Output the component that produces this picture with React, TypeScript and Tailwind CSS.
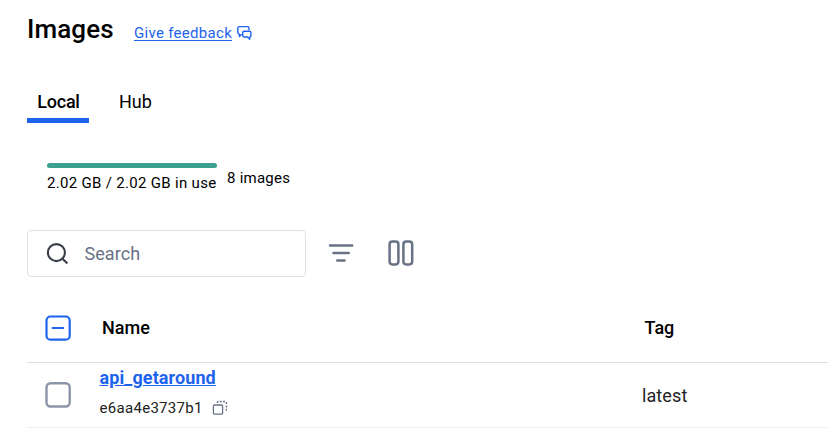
import React from "react";

function FeedbackIcon() {
  return (
    <svg className="h-4 w-4" viewBox="0 0 16 16" fill="none" stroke="#1d63ed" strokeWidth="1.4" strokeLinejoin="round">
      <path d="M4.6 9.2L2.4 11.4V9.2C1.3 9.1 0.8 8.5 0.8 7.6V3.2C0.8 2.2 1.4 1.6 2.4 1.6H10.4C11.4 1.6 12 2.2 12 3.2V5.2" />
      <path d="M7.2 6.2H12.4C13.3 6.2 13.9 6.8 13.9 7.6V10.6C13.9 11.4 13.5 11.9 12.7 12V14.2L10.5 12H7.2C6.3 12 5.7 11.4 5.7 10.6V7.6C5.7 6.8 6.3 6.2 7.2 6.2Z" />
    </svg>
  );
}

function CopyIcon() {
  return (
    <svg className="h-4 w-4" viewBox="0 0 16 16" fill="none" stroke="#677285" strokeWidth="1.3">
      <rect x="1.4" y="5" width="9.2" height="9.2" rx="1.2" />
      <path d="M5.3 3V2.6Q5.3 1.5 6.4 1.5H13.3Q14.4 1.5 14.4 2.6V9.6Q14.4 10.7 13.3 10.7H12.6" strokeDasharray="2 1.3" />
    </svg>
  );
}

function App() {
  return (
    <main className="h-[428px] w-[828px] overflow-hidden bg-white pl-[27px] font-['Roboto',sans-serif] whitespace-nowrap text-black">
      <header className="flex h-[60px] items-start">
        <h1 className="mt-[14px] w-[107px] text-[26px] leading-[30px] font-medium tracking-[0.1px]">Images</h1>
        <a className="mt-[23px] flex items-center text-[#1d63ed]" href="#">
          <span className="mr-[5px] w-[98px] text-[15px] leading-5 tracking-[0.3px] underline underline-offset-2">Give feedback</span>
          <FeedbackIcon />
        </a>
      </header>
      <nav className="mt-[22px] flex h-[41px] text-[18px] leading-10">
        <div className="w-[62px] border-b-[5px] border-[#1d63ed] pl-[10.3px] font-medium leading-[39px] tracking-[-0.25px]">Local</div>
        <div className="ml-[30px] leading-[39px]">Hub</div>
      </nav>
      <section className="ml-5 mt-10 flex h-[67px] text-[15px] tracking-[0.31px]">
        <div className="w-[170px]">
          <div className="h-[5px] rounded-full bg-[#3ba08d]" />
          <div className="mt-[5px] leading-5">2.02 GB / 2.02 GB in use</div>
        </div>
        <div className="ml-[10px] mt-[5px] leading-5 tracking-[0.25px]">8 images</div>
      </section>
      <div className="flex h-[47px] items-center">
        <div className="flex h-[47px] w-[279px] items-center rounded-[4px] border border-[#dedfe1] pl-[18px]">
          <svg className="h-6 w-6" viewBox="0 0 24 24" fill="none" stroke="#393f49" strokeWidth="2.1">
            <circle cx="10.4" cy="10.6" r="8.5" />
            <path d="M16.5 16.7L21.4 21.6" />
          </svg>
          <span className="ml-[14.5px] text-[18px] tracking-[0.05px] text-[#677285]">Search</span>
        </div>
        <svg className="ml-[22px] h-7 w-7" viewBox="0 0 28 28" stroke="#677285" strokeWidth="2.5" strokeLinecap="round">
          <path d="M2 5.4H24.2M5.5 13H20.7M9.3 20.4H16.5" />
        </svg>
        <svg className="ml-[31px] h-7 w-7" viewBox="0 0 28 28" fill="none" stroke="#677285" strokeWidth="2.5">
          <rect x="2.6" y="1.6" width="8.8" height="22.8" rx="2.8" />
          <rect x="16.4" y="1.6" width="8.8" height="22.8" rx="2.8" />
        </svg>
      </div>
      <div className="mt-[17px] flex h-[69px] items-center border-b border-[#dcdddf] text-[18px] font-medium">
        <svg className="ml-[18px] h-[26px] w-[26px]" viewBox="0 0 26 26" fill="none" stroke="#1d63ed" strokeWidth="2.2">
          <rect x="1.5" y="1.5" width="23.2" height="23.2" rx="4" />
          <path d="M7.6 13H18.2" strokeLinecap="round" />
        </svg>
        <span className="mb-[2px] ml-[31px] w-[542.6px]">Name</span>
        <span className="mb-[2px]">Tag</span>
      </div>
      <div className="flex h-[65px] items-center border-b border-[#eff0f1]">
        <svg className="ml-[18px] h-[26px] w-[26px]" viewBox="0 0 26 26" fill="none" stroke="#8c95a8" strokeWidth="2.4">
          <rect x="1.5" y="1.3" width="23.2" height="23.2" rx="4" />
        </svg>
        <div className="ml-[28.5px] h-[64px] w-[542.5px]">
          <a href="#" className="mt-[3px] block text-[18px] leading-6 font-bold tracking-[0.1px] text-[#1d63ed] underline">api_getaround</a>
          <div className="mt-[8px] flex items-center text-[15px] leading-5 text-[#222]">
            <span className="w-[112.5px] tracking-[0.3px]">e6aa4e3737b1</span>
            <CopyIcon />
          </div>
        </div>
        <span className="text-[18px] tracking-[0.1px] text-[#222]">latest</span>
      </div>
    </main>
  );
}

export default App;
